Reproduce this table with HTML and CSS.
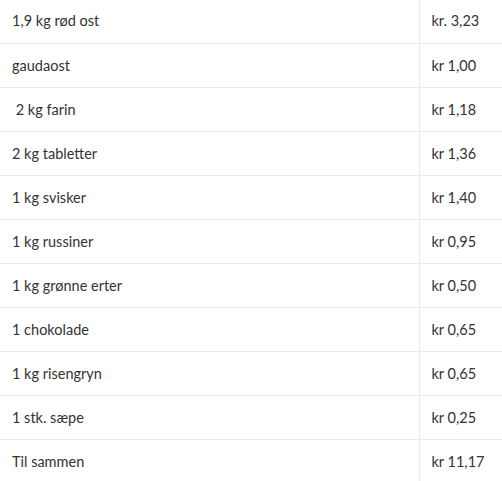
FILE: index.html
```html
<!DOCTYPE html>
<html lang="da">
<head>
<meta charset="utf-8">
<link rel="stylesheet" href="styles.css">
</head>
<body>
<table class="list">
<tbody>
<tr><td class="item">1,9 kg rød ost</td><td class="price">kr. 3,23</td></tr>
<tr><td class="item">gaudaost</td><td class="price">kr 1,00</td></tr>
<tr><td class="item">&nbsp;2 kg farin</td><td class="price">kr 1,18</td></tr>
<tr><td class="item">2 kg tabletter</td><td class="price">kr 1,36</td></tr>
<tr><td class="item">1 kg svisker</td><td class="price">kr 1,40</td></tr>
<tr><td class="item">1 kg russiner</td><td class="price">kr 0,95</td></tr>
<tr><td class="item">1 kg grønne erter</td><td class="price">kr 0,50</td></tr>
<tr><td class="item">1 chokolade</td><td class="price">kr 0,65</td></tr>
<tr><td class="item">1 kg risengryn</td><td class="price">kr 0,65</td></tr>
<tr><td class="item">1 stk. sæpe</td><td class="price">kr 0,25</td></tr>
<tr><td class="item">Til sammen</td><td class="price">kr 11,17</td></tr>
</tbody>
</table>
</body>
</html>
```
FILE: styles.css
```css
html, body {
  margin: 0;
  padding: 0;
  background: #fff;
}
body {
  font-family: Lato, "Open Sans", sans-serif;
  font-size: 14.5px;
  color: #333;
}
.list {
  border-collapse: collapse;
  width: 502px;
  margin-top: -1px;
}
.list td {
  height: 44px;
  box-sizing: border-box;
  padding: 0 12px;
  border-bottom: 1px solid #ebebeb;
  vertical-align: middle;
  white-space: pre;
}
.list td.item {
  width: 419px;
  border-right: 1px solid #ebebeb;
}
.list td.price {
  padding-left: 12px;
}
```
